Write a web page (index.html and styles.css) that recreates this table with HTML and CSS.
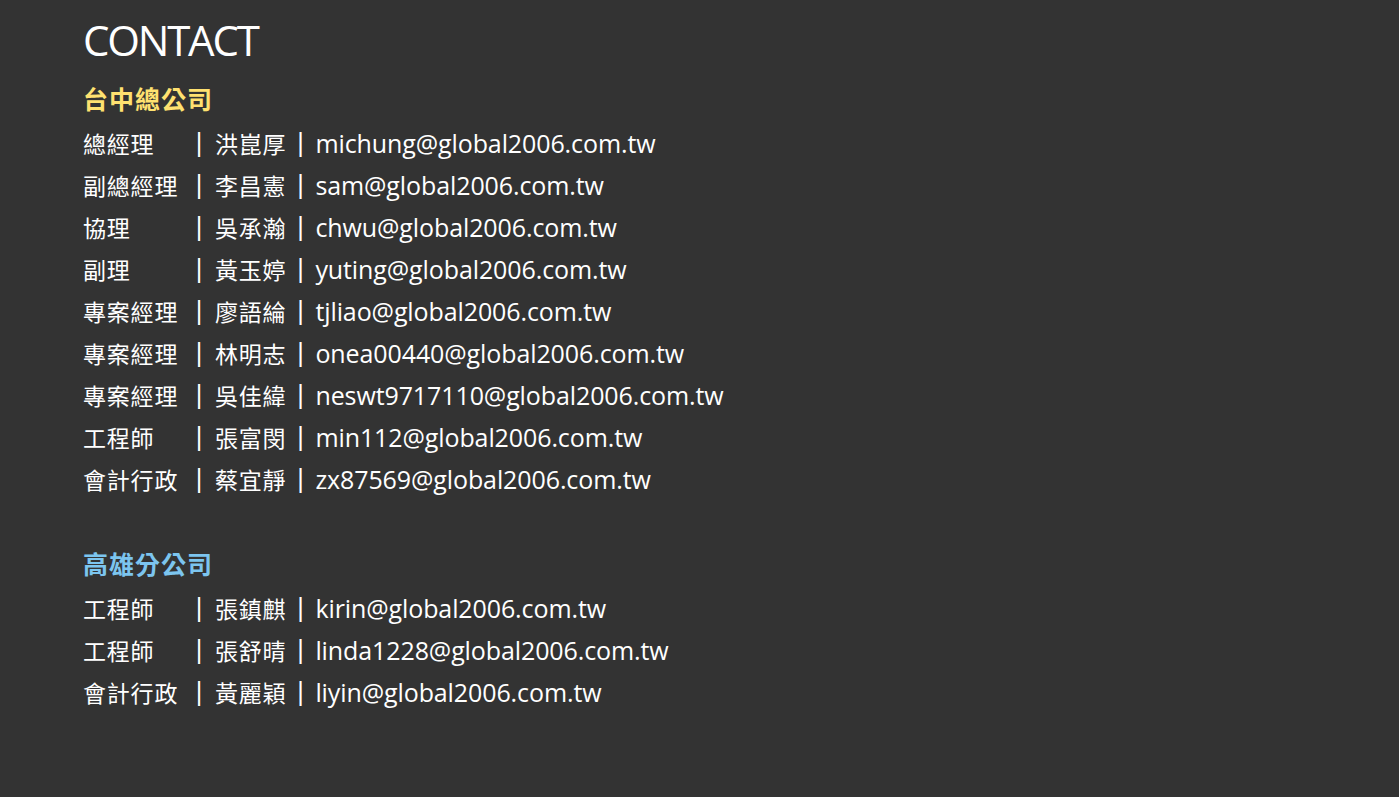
FILE: index.html
```html
<!DOCTYPE html>
<html lang="zh-Hant">
<head>
<meta charset="utf-8">
<title>CONTACT</title>
<link rel="stylesheet" href="styles.css">
</head>
<body>
<main class="contact">
  <h1 class="title">CONTACT</h1>

  <section class="office">
    <h2 class="office-name office-name--hq">台中總公司</h2>
    <ul class="staff">
      <li class="staff-row"><span class="role">總經理</span><span class="sep">|</span><span class="name">洪崑厚</span><span class="sep">|</span><span class="email">michung@global2006.com.tw</span></li>
      <li class="staff-row"><span class="role">副總經理</span><span class="sep">|</span><span class="name">李昌憲</span><span class="sep">|</span><span class="email">sam@global2006.com.tw</span></li>
      <li class="staff-row"><span class="role">協理</span><span class="sep">|</span><span class="name">吳承瀚</span><span class="sep">|</span><span class="email">chwu@global2006.com.tw</span></li>
      <li class="staff-row"><span class="role">副理</span><span class="sep">|</span><span class="name">黃玉婷</span><span class="sep">|</span><span class="email">yuting@global2006.com.tw</span></li>
      <li class="staff-row"><span class="role">專案經理</span><span class="sep">|</span><span class="name">廖語綸</span><span class="sep">|</span><span class="email">tjliao@global2006.com.tw</span></li>
      <li class="staff-row"><span class="role">專案經理</span><span class="sep">|</span><span class="name">林明志</span><span class="sep">|</span><span class="email">onea00440@global2006.com.tw</span></li>
      <li class="staff-row"><span class="role">專案經理</span><span class="sep">|</span><span class="name">吳佳緯</span><span class="sep">|</span><span class="email">neswt9717110@global2006.com.tw</span></li>
      <li class="staff-row"><span class="role">工程師</span><span class="sep">|</span><span class="name">張富閔</span><span class="sep">|</span><span class="email">min112@global2006.com.tw</span></li>
      <li class="staff-row"><span class="role">會計行政</span><span class="sep">|</span><span class="name">蔡宜靜</span><span class="sep">|</span><span class="email">zx87569@global2006.com.tw</span></li>
    </ul>
  </section>

  <section class="office office--branch">
    <h2 class="office-name office-name--branch">高雄分公司</h2>
    <ul class="staff">
      <li class="staff-row"><span class="role">工程師</span><span class="sep">|</span><span class="name">張鎮麒</span><span class="sep">|</span><span class="email">kirin@global2006.com.tw</span></li>
      <li class="staff-row"><span class="role">工程師</span><span class="sep">|</span><span class="name">張舒晴</span><span class="sep">|</span><span class="email">linda1228@global2006.com.tw</span></li>
      <li class="staff-row"><span class="role">會計行政</span><span class="sep">|</span><span class="name">黃麗穎</span><span class="sep">|</span><span class="email">liyin@global2006.com.tw</span></li>
    </ul>
  </section>
</main>
</body>
</html>
```

FILE: styles.css
```css
html, body {
  margin: 0;
  padding: 0;
  background: #333333;
  height: 100%;
}

body {
  color: #ffffff;
  font-family: "Open Sans", "Noto Sans CJK TC", sans-serif;
}

.contact {
  padding: 14px 0 0 83px;
}

.title {
  margin: 0;
  font-size: 42px;
  font-weight: 500;
  line-height: 52px;
  letter-spacing: -2.2px;
}

.office {
  margin-top: 14px;
}

.office--branch {
  margin-top: 45px;
}

.office-name {
  margin: 0 0 6px;
  font-family: "Noto Sans CJK TC", sans-serif;
  font-size: 25px;
  font-weight: 700;
  line-height: 36px;
  letter-spacing: 1px;
}

.office-name--hq {
  color: #ffe170;
}

.office-name--branch {
  color: #7cc5ef;
}

.staff {
  list-style: none;
  margin: 0;
  padding: 0;
}

.staff-row {
  display: flex;
  align-items: center;
  height: 42px;
  font-size: 23px;
}

.role,
.name {
  font-family: "Noto Sans CJK TC", sans-serif;
  font-size: 23px;
  letter-spacing: 0.8px;
  font-weight: 400;
}

.role {
  width: 112px;
}

.sep {
  font-family: "DejaVu Sans", sans-serif;
  font-size: 24px;
  width: 8px;
  text-align: center;
  margin-right: 12px;
}

.name + .sep {
  margin-left: 10px;
  margin-right: 11px;
}

.email {
  font-family: "Open Sans", sans-serif;
  font-size: 25px;
  letter-spacing: -0.1px;
}
```
